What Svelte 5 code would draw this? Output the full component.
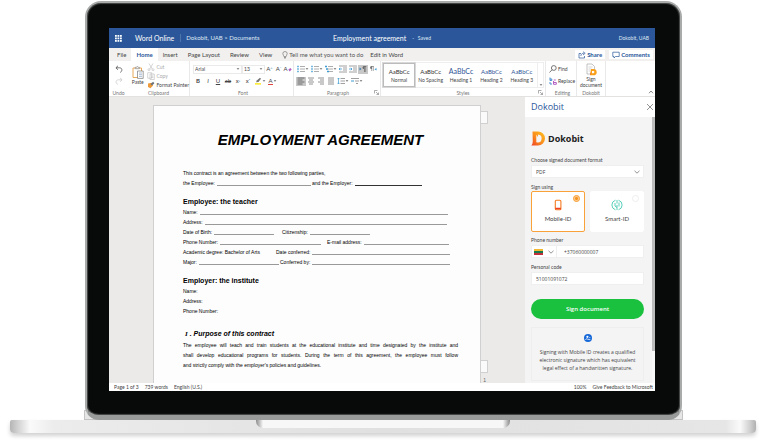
<script lang="ts">
    type Field = { label: string; width: number; line?: boolean; dark?: boolean };

    const tabs = ['File', 'Home', 'Insert', 'Page Layout', 'Review', 'View'];
    const styles = ['Normal', 'No Spacing', 'Heading 1', 'Heading 2', 'Heading 3'];

    const parties: Field[] = [
        { label: 'the Employee:', width: 128, line: true },
        { label: 'and the Employer:', width: 110, line: true, dark: true }
    ];
    const teacher: Field[][] = [
        [{ label: 'Name:', width: 265, line: true }],
        [{ label: 'Address:', width: 264, line: true }],
        [{ label: 'Date of Birth:', width: 91, line: true }, { label: 'Citizenship:', width: 88, line: true }],
        [{ label: 'Phone Number:', width: 138, line: true }, { label: 'E-mail address:', width: 122, line: true }],
        [{ label: 'Academic degree: Bachelor of Arts', width: 85 }, { label: 'Date conferred:', width: 174, line: true }],
        [{ label: 'Major:', width: 96, line: true }, { label: 'Conferred by:', width: 170, line: true }]
    ];
    const gaps = [0, 0, 8, 6, 8, 1];
    const institute = ['Name:', 'Address:', 'Phone Number:'];

    let activeTab = $state('Home');
    let activeStyle = $state('Normal');
    let method = $state('mobile');
    let phone = $state('+37060000007');
    let code = $state('51001091072');
</script>

{#snippet caret()}
    <svg class="caret" viewBox="0 0 4 4"><path d="M.6 1.2h2.8L2 2.8z" fill="#666" /></svg>
{/snippet}

{#snippet chevron()}
    <svg class="chevron" viewBox="0 0 6 6"><path d="M.5 1.8 3 4.2l2.5-2.4" fill="none" stroke="#666" stroke-width=".7" /></svg>
{/snippet}

{#snippet lines(x1: number, x2: number, color: string)}
    <path d="M{x1} 1.5H{x2}M{x1} 4H{x2}M{x1} 6.5H{x2}" stroke={color} stroke-width=".8" />
{/snippet}

{#snippet launcher()}
    <svg class="launcher" viewBox="0 0 5 5" fill="none" stroke="#777" stroke-width=".6"><path d="M.5 3.5v-3h3M2 2l2.4 2.4M4.5 2.5v2h-2" /></svg>
{/snippet}

{#snippet field(f: Field)}
    <span class="field" style="width: {f.width}px">
        {f.label}
        {#if f.line}<span class="rule" class:dark={f.dark}></span>{/if}
    </span>
{/snippet}

<div class="laptop">
    <div class="lid">
        <div class="screen">
            <header class="topbar">
                <div class="side">
                    <button class="waffle" aria-label="App launcher">
                        <svg viewBox="0 0 7 7" fill="#fff">
                            {#each [0, 2.5, 5] as y}
                                {#each [0, 2.5, 5] as x}
                                    <rect {x} {y} width="1.8" height="1.8" />
                                {/each}
                            {/each}
                        </svg>
                    </button>
                    <span class="brand">Word Online</span>
                    <nav class="crumbs"><a href="#org">Dokobit, UAB</a> &gt; <a href="#docs">Documents</a></nav>
                </div>
                <span class="doc-name">Employment agreement</span>
                <span class="saved">-&nbsp;&nbsp; Saved</span>
                <div class="side">
                    <a class="account" href="#account">Dokobit, UAB</a>
                </div>
            </header>

            <nav class="tabs">
                {#each tabs as tab}
                    <button class="tab" class:active={activeTab === tab} onclick={() => (activeTab = tab)}>{tab}</button>
                {/each}
                <label class="tell">
                    <svg class="icon" viewBox="0 0 8 8" fill="none" stroke="#666" stroke-width=".6">
                        <path d="M2.9 5.6C2.9 4.5 1.8 4 1.8 2.7a2.2 2.2 0 0 1 4.4 0C6.2 4 5.1 4.5 5.1 5.6zM3 6.5h2M3.4 7.3h1.2" />
                    </svg>
                    <input placeholder="Tell me what you want to do" aria-label="Tell me what you want to do" />
                </label>
                <button class="tab">Edit in Word</button>
                <button class="chip share">
                    <svg class="icon" viewBox="0 0 8 8" fill="none" stroke="#2b579a" stroke-width=".7">
                        <path d="M3 2.5H1V7h5.500V5M2.800 5c.2-2 1.500-2.700 3-2.700M5 .7l2.200 1.600L5 4" />
                    </svg>
                    Share
                </button>
                <button class="chip">
                    <svg class="icon" viewBox="0 0 8 8" fill="none" stroke="#2b579a" stroke-width=".7">
                        <path d="M.8 1.2h6.400v4.300H3.500L2 7V5.500H.8z" />
                    </svg>
                    Comments
                </button>
            </nav>

            <div class="ribbon">
                <section class="group undo">
                    <div class="body column">
                        <button aria-label="Undo">
                            <svg class="icon" viewBox="0 0 8 8" fill="none" stroke="#555" stroke-width=".8"><path d="M3 .8.900 2.800 3 4.800M1 2.800h3.500c3 0 3 3.200.8 4.700" /></svg>
                        </button>
                        <button aria-label="Redo">
                            <svg class="icon" viewBox="0 0 8 8" fill="none" stroke="#ccc" stroke-width=".8"><path d="M5 .8l2.100 2L5 4.800M7 2.800H3.500c-3 0-3 3.200-.8 4.700" /></svg>
                        </button>
                    </div>
                    <footer>Undo</footer>
                </section>

                <section class="group clipboard">
                    <div class="body">
                        <button class="paste">
                            <svg viewBox="0 0 12 13" fill="none">
                                <path d="M1 2h8.500v9.500H1z" fill="#fff" stroke="#e8a95a" />
                                <path d="M3.200 2.700V1.300h1.300c0-1 1.600-1 1.600 0h1.300v1.400z" fill="#fff" stroke="#777" stroke-width=".6" />
                                <path d="M5.500 5h5.700v7.400H5.500z" fill="#fff" stroke="#777" stroke-width=".7" />
                                <path d="M7 7h3M7 8.700h3M7 10.400h3" stroke="#7794b8" stroke-width=".6" />
                            </svg>
                            Paste
                        </button>
                        <div class="stack">
                            <button disabled>
                                <svg class="icon" viewBox="0 0 8 8" fill="none" stroke="#bbb" stroke-width=".6"><path d="M2 .5 5.300 6M6 .5 2.700 6" /><circle cx="2" cy="6.7" r="1" /><circle cx="6" cy="6.7" r="1" /></svg>
                                Cut
                            </button>
                            <button disabled>
                                <svg class="icon" viewBox="0 0 8 8" fill="#fff" stroke="#bbb" stroke-width=".6"><path d="M.7.7h4v5.500h-4zM3 2h4.300v5.500H3z" /><path d="M4 4h2.300M4 5.500h2.300" /></svg>
                                Copy
                            </button>
                            <button>
                                <svg class="icon" viewBox="0 0 8 8"><path d="M1 2.500 4.500 1.800 6 4.500 3.500 7.200 1 6z" fill="#ed9a3c" /><path d="M3.500 3 6.200.8l1.200 1.400L5 4.600z" fill="#69737c" /></svg>
                                Format Painter
                            </button>
                        </div>
                    </div>
                    <footer>Clipboard</footer>
                </section>

                <section class="group font">
                    <div class="body column">
                        <div class="row">
                            <span class="select family">
                                <select aria-label="Font"><option>Arial</option></select>
                                {@render caret()}
                            </span>
                            <span class="select size">
                                <select aria-label="Font size"><option>13</option></select>
                                {@render caret()}
                            </span>
                            <button class="tool">A<sup>^</sup></button>
                            <button class="tool">A<sup>ˇ</sup></button>
                            <button class="tool" aria-label="Clear formatting">
                                A<svg class="mark" viewBox="0 0 4 6"><path d="M.3 3.500 2.500 2l1.200 1.500-2 2z" fill="#b35fc4" /></svg>
                            </button>
                        </div>
                        <div class="row marks">
                            <button><b>B</b></button>
                            <button><i>I</i></button>
                            <button><u>U</u></button>
                            <button><s>ab</s></button>
                            <button>x<sub>₂</sub></button>
                            <button>x<sup>²</sup></button>
                            <button class="pen" aria-label="Highlight">
                                <svg class="icon" viewBox="0 0 8 8"><path d="M1 6h6v1.700H1z" fill="#ffec3d" /><path d="M2 5.200 3 3.200 6 .7l1 1.100L4.500 5z" fill="#777" /></svg>
                                {@render caret()}
                            </button>
                            <button class="ink"><span>A</span>{@render caret()}</button>
                        </div>
                    </div>
                    <footer>Font</footer>
                </section>

                <section class="group paragraph">
                    <div class="body column">
                        <div class="row">
                            {#each ['Bullets', 'Numbering', 'Multilevel list'] as name, i}
                                <button class="drop" aria-label={name}>
                                    <svg class="icon" viewBox="0 0 8 8">
                                        {@render lines(3, 8, '#999')}
                                        <path d={i === 2 ? 'M0 1.5h2M1 4h2M2 6.5h2' : 'M.3 1.5h1.4M.3 4h1.4M.3 6.5h1.4'} stroke="#3c9bd0" stroke-width="1.3" />
                                    </svg>
                                    {@render caret()}
                                </button>
                            {/each}
                            {#each ['Decrease indent', 'Increase indent'] as name, i}
                                <button aria-label={name}>
                                    <svg class="icon" viewBox="0 0 8 8">
                                        <path d="M0 1h8M4 3h4M4 5h4M0 7h8" stroke="#888" stroke-width=".8" />
                                        <path d={i ? 'M0 4h3M1.8 2.8 3 4 1.8 5.2' : 'M0 4h3M1.2 2.8 0 4l1.2 1.2'} fill="none" stroke="#3c9bd0" stroke-width=".8" />
                                    </svg>
                                </button>
                            {/each}
                            <button class="pressed" aria-label="Left to right">
                                <svg class="icon" viewBox="0 0 8 8"><path d="M.5 2.500v3L2.500 4z" fill="#3c7fb0" /><path d="M7.500 1H5a1.500 1.500 0 0 0 0 3V7h.7V1.700h.8V7h.6V1.700z" fill="#666" /></svg>
                            </button>
                            <button aria-label="Right to left">
                                <svg class="icon" viewBox="0 0 8 8"><path d="M5 1H2.500a1.500 1.500 0 0 0 0 3v2h.6V1.700h.8V6h.6V1.700z" fill="#777" /><path d="M7.500 3v2.500L5.500 4.200z" fill="#3c9bd0" /></svg>
                            </button>
                        </div>
                        <div class="row">
                            <button class="pressed" aria-label="Align left">
                                <svg class="icon" viewBox="0 0 8 8"><path d="M.5 1h7M.5 3h5M.5 5h7M.5 7h5" stroke="#555" stroke-width=".8" /></svg>
                            </button>
                            <button aria-label="Center">
                                <svg class="icon" viewBox="0 0 8 8"><path d="M1 1h6M2 3h4M1 5h6M2 7h4" stroke="#777" stroke-width=".8" /></svg>
                            </button>
                            <button aria-label="Align right">
                                <svg class="icon" viewBox="0 0 8 8"><path d="M1 1h6M3 3h4M1 5h6M3 7h4" stroke="#777" stroke-width=".8" /></svg>
                            </button>
                            <button aria-label="Justify">
                                <svg class="icon" viewBox="0 0 8 8"><path d="M1 1h6M1 3h6M1 5h6M1 7h6" stroke="#777" stroke-width=".8" /></svg>
                            </button>
                            <button class="drop" aria-label="Line spacing">
                                <svg class="icon" viewBox="0 0 8 8">
                                    {@render lines(3.5, 8, '#888')}
                                    <path d="M1.500 1v6M.4 2.200 1.500 1l1.100 1.200M.4 5.800 1.500 7l1.100-1.200" fill="none" stroke="#3c9bd0" stroke-width=".7" />
                                </svg>
                                {@render caret()}
                            </button>
                            <button class="drop" aria-label="Paragraph options">
                                <svg class="icon" viewBox="0 0 8 8"><path d="M0 1.500h8M4 4h4M5 6.500h2" stroke="#888" stroke-width=".8" /><path d="M0 4h3" stroke="#3c9bd0" /></svg>
                                {@render caret()}
                            </button>
                        </div>
                    </div>
                    <footer>Paragraph {@render launcher()}</footer>
                </section>

                <section class="group styles">
                    <div class="gallery">
                        {#each styles as name, i}
                            <button class="style" class:chosen={activeStyle === name} onclick={() => (activeStyle = name)}>
                                <span class="sample" class:blue={i > 1} class:large={i === 2}>AaBbCc</span>
                                {name}
                            </button>
                        {/each}
                        <button class="more" aria-label="More styles">{@render caret()}</button>
                    </div>
                    <footer>Styles {@render launcher()}</footer>
                </section>

                <section class="group editing">
                    <div class="body column">
                        <button>
                            <svg class="icon" viewBox="0 0 8 8" fill="none" stroke="#555" stroke-width=".8"><circle cx="4.8" cy="3" r="2.4" /><path d="M3 4.800.5 7.500" /></svg>
                            Find
                        </button>
                        <button>
                            <svg class="icon" viewBox="0 0 8 8" fill="none" stroke-width="1"><path d="M1 .5v3h1.800V2H1M1 5v2h2" stroke="#4a8fd0" /><path d="M4.800 3h2M4.500 5.500h2.800V7.300H4.500V4" stroke="#b35fc4" /></svg>
                            Replace
                        </button>
                    </div>
                    <footer>Editing</footer>
                </section>

                <section class="group sign">
                    <button class="paste">
                        <svg viewBox="0 0 12 13" fill="none">
                            <path d="M2 1h5l2.500 2.500V11H2z" fill="#fff" stroke="#aaa" stroke-width=".7" />
                            <path d="M3.500 4h4M3.500 6h3M3.500 8h2" stroke="#bbb" stroke-width=".6" />
                            <path d="M6 6h2.500a3 3 0 0 1 0 6.300H5z" fill="#f9a01b" />
                            <path d="M7 8h1.300a1 1 0 0 1 0 2.200H7z" fill="#fff" />
                            <path d="M5 12.300 6 9v2z" fill="#f04e23" />
                        </svg>
                        Sign document
                    </button>
                    <footer>Dokobit</footer>
                </section>

                <button class="collapse" aria-label="Collapse ribbon">
                    <svg class="chevron" viewBox="0 0 6 6"><path d="M1 4.200 3 2l2 2.200" fill="none" stroke="#555" stroke-width=".7" /></svg>
                </button>
            </div>

            <main class="workspace">
                <div class="canvas">
                    <article class="page">
                        <h1>EMPLOYMENT AGREEMENT</h1>
                        <p class="line">This contract is an agreement between the two following parties,</p>
                        <p class="line parties">
                            {#each parties as f}{@render field(f)}{/each}
                        </p>

                        <h2>Employee: the teacher</h2>
                        {#each teacher as row, i}
                            <p class="line" style="gap: {gaps[i]}px">
                                {#each row as f}{@render field(f)}{/each}
                            </p>
                        {/each}

                        <h2>Employer: the institute</h2>
                        {#each institute as label}
                            <p class="line">{label}</p>
                        {/each}

                        <h2 class="clause"><span>I</span> . Purpose of this contract</h2>
                        <p class="prose">
                            <span>The employee will teach and train students at the educational institute and time designated by the institute and</span>
                            <span>shall develop educational programs for students. During the term of this agreement, the employee must follow</span>
                            and strictly comply with the employer's policies and guidelines.
                        </p>
                        <i class="flag top"></i>
                        <i class="flag bottom"></i>
                        <span class="page-number">1</span>
                    </article>
                </div>

                <aside class="panel">
                    <header class="panel-head">
                        Dokobit
                        <button aria-label="Close">
                            <svg class="icon" viewBox="0 0 8 8"><path d="M1 1l6 6M7 1 1 7" stroke="#666" stroke-width=".7" /></svg>
                        </button>
                    </header>
                    <div class="panel-scroll">
                        <form class="panel-body" onsubmit={(e) => e.preventDefault()}>
                            <div class="logo">
                                <svg viewBox="0 0 15 15">
                                    <defs>
                                        <linearGradient id="flame" x1="1" y1="0" x2="0" y2="1">
                                            <stop offset="0" stop-color="#ffc31f" />
                                            <stop offset=".55" stop-color="#f98a1d" />
                                            <stop offset="1" stop-color="#ee3f24" />
                                        </linearGradient>
                                    </defs>
                                    <path fill="url(#flame)" fill-rule="evenodd" d="M1.500.5H7a7 7 0 0 1 0 14H.3C2 13 1.800 11 1.700 8zM5.300 3.600v6.800c0 .7.200 1 1 1a3.900 3.900 0 0 0 .8-7.800L6.700 6z" />
                                </svg>
                                Dokobit
                            </div>

                            <label class="caption" for="format">Choose signed document format</label>
                            <span class="control">
                                <select id="format"><option>PDF</option></select>
                                {@render chevron()}
                            </span>

                            <span id="using">Sign using</span>
                            <div class="methods" role="radiogroup" aria-labelledby="using">
                                <label class="method" class:selected={method === 'mobile'}>
                                    <input type="radio" value="mobile" bind:group={method} />
                                    <svg viewBox="0 0 12 12" fill="none"><rect x="3.3" y="1.2" width="5.6" height="9.6" rx="1" stroke="#f47b20" stroke-width="1.1" /><path d="M3.300 9.500h5.600" stroke="#ee3f24" stroke-width="1.5" /></svg>
                                    Mobile-ID
                                </label>
                                <label class="method" class:selected={method === 'smart'}>
                                    <input type="radio" value="smart" bind:group={method} />
                                    <svg viewBox="0 0 12 12" fill="none" stroke="#2fc4a8" stroke-width=".8"><path d="M4.500 1.200a5 5 0 0 0 0 9.600M7.500 1.200a5 5 0 0 1 0 9.600M6 1v3.500M6 6v5M4 4v3l2 1.500M8 3.500v4" /></svg>
                                    Smart-ID
                                </label>
                            </div>

                            <label class="caption" for="phone">Phone number</label>
                            <span class="control">
                                <button type="button" class="country" aria-label="Country">
                                    <svg class="flag-lt" viewBox="0 0 9 6"><path d="M0 0h9v2H0z" fill="#f5b72f" /><path d="M0 2h9v2H0z" fill="#187a4a" /><path d="M0 4h9v2H0z" fill="#c1303a" /></svg>
                                    {@render chevron()}
                                </button>
                                <input id="phone" bind:value={phone} />
                            </span>

                            <label class="caption" for="code">Personal code</label>
                            <span class="control"><input id="code" bind:value={code} /></span>

                            <button class="submit">Sign document</button>

                            <div class="note">
                                <svg viewBox="0 0 8 8"><circle cx="4" cy="4" r="4" fill="#1768d8" /><path d="M1.500 5.900c.6-1.300 1.200-1.300 1.800-.9.700.4 1.200.7 3 .5" fill="none" stroke="#fff" stroke-width=".8" /><circle cx="3.4" cy="2.8" r="1.1" fill="#fff" /><path d="M5 4.300 6.300 3" stroke="#fff" stroke-width=".7" /></svg>
                                <p>Signing with Mobile ID creates a qualified electronic signature which has equivalent legal effect of a handwritten signature.</p>
                            </div>
                        </form>
                        <div class="scrollbar"><div class="thumb"></div></div>
                    </div>
                </aside>
            </main>

            <footer class="status">
                <span>Page 1 of 3</span>
                <span>739 words</span>
                <span>English (U.S.)</span>
                <span class="zoom">100%</span>
                <a href="#feedback">Give Feedback to Microsoft</a>
            </footer>
        </div>
    </div>
    <div class="base"><div class="notch"></div></div>
</div>

<style>
    :global(body) {
        background: #fff;
    }

    .laptop {
        font: 5px/8px Lato, 'Open Sans', sans-serif;
        color: #444;
        padding: 1px 6px 9px 10px;
    }

    .laptop * {
        box-sizing: border-box;
    }

    button,
    input,
    select {
        font: inherit;
        color: inherit;
        background: none;
        border: 0;
        border-radius: 0;
        margin: 0;
        padding: 0;
        min-width: 0;
        appearance: none;
        outline: none;
    }

    button {
        display: flex;
        align-items: center;
        justify-content: center;
        white-space: nowrap;
        cursor: pointer;
    }

    a {
        color: inherit;
        text-decoration: none;
    }

    h1, h2, p {
        margin: 0;
    }

    svg {
        display: block;
        flex: none;
    }

    .icon {
        width: 8px;
        height: 8px;
    }

    .caret {
        width: 4px;
        height: 4px;
    }

    .chevron {
        width: 6px;
        height: 6px;
    }

    /* laptop frame */
    .lid {
        position: relative;
        margin: 0 74px 0 75px;
        padding: 25px 25px 24px 22px;
        background: #080a09;
        border: 2px solid #a9abaa;
        border-bottom: 5px solid #999b9a;
        border-radius: 16px 16px 14px 14px;
        box-shadow: inset 0 0 1px 1px #4a4c4b;
    }

    /* hinge behind the lid */
    .lid::after {
        content: '';
        position: absolute;
        z-index: -1;
        left: -3px;
        right: -3px;
        bottom: -5px;
        height: 8px;
        background: #e6e6e6;
        border: 1px solid #c4c4c4;
    }

    .base {
        display: flex;
        justify-content: center;
        height: 13px;
        border-radius: 2px 2px 4px 4px;
        background: linear-gradient(90deg, #b5b5b5, #d2d2d2 8px, #fafafa 20px, #ececec 44px, #e0e0e0 50%, #e6e6e6 calc(100% - 30px), #fafafa calc(100% - 16px), #d0d0d0 calc(100% - 6px), #b0b0b0);
        box-shadow: 0 3px 4px rgba(0, 0, 0, .18);
    }

    .notch {
        width: 34%;
        height: 8px;
        border-radius: 0 0 7px 7px;
        background: linear-gradient(90deg, #8a8a8a, #f7f7f7 7px, #f7f7f7 calc(100% - 7px), #8a8a8a);
    }

    .screen {
        background: #fff;
    }

    /* title bar */
    .topbar {
        display: flex;
        align-items: center;
        height: 20px;
        padding: 0 6px;
        background: #2b579a;
        color: #dfe7f3;
    }

    .side {
        display: flex;
        align-items: center;
        flex: 1;
    }

    .waffle {
        width: 7px;
        height: 7px;
        margin-right: 13px;
    }

    .waffle svg {
        width: 7px;
    }

    .brand {
        font-size: 7px;
        color: #fff;
        padding-right: 6px;
        border-right: 1px solid #4f75ad;
    }

    .crumbs {
        font-size: 6px;
        padding-left: 5px;
    }

    .doc-name {
        font-size: 7px;
        color: #fff;
    }

    .saved {
        padding-left: 6px;
    }

    .account {
        margin-left: auto;
    }

    /* tabs */
    .tabs {
        display: flex;
        align-items: center;
        height: 13px;
        padding: 0 2px 0 3px;
        background: #f1f0ef;
        font-size: 6px;
    }

    .tab {
        height: 13px;
        padding: 0 5px;
    }

    .tab.active {
        color: #2b579a;
        background: #fff;
        font-weight: 700;
    }

    .tell {
        display: flex;
        align-items: center;
        flex: 0 1 88px;
        padding-left: 4px;
    }

    .tell input {
        width: 100%;
    }

    .tell input::placeholder {
        color: #555;
        opacity: 1;
    }

    .chip {
        gap: 1px;
        height: 9px;
        padding: 0 3px;
        background: #fff;
        color: #2b579a;
        font-weight: 700;
    }

    .chip.share {
        margin: 0 4px 0 auto;
    }

    /* ribbon */
    .ribbon {
        display: flex;
        height: 36px;
        border-bottom: 1px solid #e4e2e0;
    }

    .group {
        display: flex;
        flex-direction: column;
        flex: none;
        border-right: 1px solid #e9e9e9;
    }

    .group footer {
        position: relative;
        margin-top: auto;
        height: 6px;
        line-height: 6px;
        text-align: center;
        color: #777;
    }

    .launcher {
        position: absolute;
        top: 0;
        right: 1px;
        width: 5px;
        height: 5px;
    }

    .body {
        display: flex;
        padding-top: 3px;
    }

    .column {
        flex-direction: column;
        gap: 2px;
    }

    .row {
        display: flex;
        align-items: center;
        height: 10px;
    }

    .undo {
        width: 19px;
        border: 0;
    }

    .column > button {
        height: 10px;
    }

    .clipboard {
        width: 62px;
    }

    .clipboard .body {
        padding-top: 1px;
    }

    .paste {
        flex-direction: column;
        width: 20px;
        line-height: 7px;
    }

    .paste svg {
        width: 12px;
        height: 13px;
    }

    .stack button {
        gap: 1px;
        height: 9px;
    }

    .stack button:disabled {
        color: #aaa;
    }

    .font {
        width: 104px;
        padding-left: 3px;
    }

    .select {
        display: flex;
        align-items: center;
        height: 9px;
        padding: 0 1px;
        border: 1px solid #eaeaea;
    }

    .select select {
        flex: 1;
    }

    .family {
        width: 49px;
    }

    .size {
        width: 23px;
    }

    .tool {
        width: 9px;
        font-size: 6px;
    }

    sup,
    sub {
        font-size: 4px;
        line-height: 4px;
        color: #3c7fb0;
    }

    .mark {
        width: 4px;
        height: 6px;
    }

    .marks {
        font-size: 6px;
    }

    .marks button {
        width: 10px;
    }

    .marks .pen,
    .marks .ink {
        width: 13px;
    }

    .ink span {
        line-height: 7px;
        border-bottom: 1px solid #e0443e;
    }

    .paragraph {
        width: 87px;
        padding-left: 2px;
    }

    .paragraph .row button {
        width: 10px;
        height: 9px;
    }

    .paragraph .row .drop {
        width: 14px;
    }

    .paragraph .row .pressed {
        background: #c8c8c8;
    }

    .styles {
        flex: 0 1 165px;
        padding: 1px 1px 0 1px;
    }

    .gallery {
        display: flex;
        height: 26px;
        border: 1px solid #eee;
    }

    .style {
        flex: 1;
        flex-direction: column;
    }

    .style.chosen {
        border: 1px solid #bbb;
        outline: 1px solid #d8d8d8;
    }

    .sample {
        font-size: 6px;
        line-height: 9px;
        color: #333;
    }

    .sample.blue {
        color: #2f5496;
    }

    .sample.large {
        font-size: 7px;
    }

    .more {
        width: 6px;
        align-items: flex-end;
        border-left: 1px solid #eee;
    }

    .editing {
        width: 31px;
        padding-left: 3px;
    }

    .editing .column > button {
        justify-content: flex-start;
        gap: 1px;
    }

    .sign {
        width: 29px;
    }

    .sign .paste {
        width: 28px;
        padding: 2px 2px 0;
        white-space: normal;
        line-height: 6px;
    }

    .collapse {
        align-self: flex-end;
        margin: 0 1px 1px auto;
    }

    /* document */
    .workspace {
        display: flex;
        height: 286px;
    }

    .canvas {
        flex: 1;
        min-width: 0;
        padding: 8px 44px 0;
        background: #ebeae8;
        overflow: hidden;
    }

    .page {
        position: relative;
        height: 100%;
        padding: 24px 22px 0 29px;
        background: #fdfdfd;
        border: 1px solid #d0d0d0;
        border-bottom: 0;
        font: 5px/10px 'Liberation Sans', Arial, sans-serif;
        color: #000;
    }

    h1 {
        margin-bottom: 18px;
        font-size: 15px;
        line-height: 20px;
        font-style: italic;
        text-align: center;
        white-space: nowrap;
    }

    h2 {
        margin-top: 9px;
        font-size: 7px;
        line-height: 10px;
    }

    h2.clause {
        margin: 13px 0 1px;
        font-style: italic;
    }

    .clause span {
        font-family: 'Liberation Serif', serif;
        padding-left: 2px;
    }

    .line {
        display: flex;
        white-space: nowrap;
    }

    .parties {
        gap: 1px;
    }

    .field {
        display: flex;
        flex: none;
        gap: 2px;
    }

    .rule {
        flex: 1;
        height: 8px;
        border-bottom: 1px solid #999;
    }

    .rule.dark {
        border-color: #333;
    }

    .prose {
        white-space: nowrap;
    }

    .prose span {
        display: block;
        text-align: justify;
        text-align-last: justify;
    }

    .flag {
        position: absolute;
        right: -8px;
        width: 7px;
        height: 13px;
        background: #fafafa;
        border: 1px solid #d0d0d0;
        border-left: 0;
    }

    .flag.top {
        top: 5px;
    }

    .flag.bottom {
        bottom: 10px;
    }

    .page-number {
        position: absolute;
        right: -6px;
        bottom: -2px;
        color: #666;
    }

    /* side panel */
    .panel {
        display: flex;
        flex-direction: column;
        width: 130px;
        background: #f4f4f5;
    }

    .panel-head {
        display: flex;
        align-items: center;
        justify-content: space-between;
        height: 20px;
        padding: 0 1px 0 6px;
        background: #fff;
        font: 9px/20px 'Open Sans', sans-serif;
        color: #2b579a;
    }

    .panel-scroll {
        display: flex;
        flex: 1;
    }

    .panel-body {
        display: flex;
        flex-direction: column;
        flex: 1;
        padding: 14px 8px 0 6px;
    }

    .logo {
        display: flex;
        align-items: center;
        gap: 2px;
        margin-bottom: 10px;
        font: 700 9px/15px 'Open Sans', sans-serif;
        color: #222;
    }

    .logo svg {
        width: 15px;
        height: 15px;
    }

    .caption {
        margin-bottom: 1px;
    }

    .control {
        display: flex;
        align-items: center;
        height: 13px;
        margin-bottom: 5px;
        background: #fff;
        border: 1px solid #efefef;
        font-family: 'Open Sans', sans-serif;
    }

    .control select,
    .control input {
        flex: 1;
        padding-left: 4px;
    }

    .control .chevron {
        margin-right: 3px;
    }

    .country {
        gap: 5px;
        height: 11px;
        padding-left: 2px;
        margin-right: 3px;
        border-right: 1px solid #eee;
    }

    .control .country .chevron {
        margin-right: 2px;
    }

    .flag-lt {
        width: 9px;
        height: 6px;
    }

    .methods {
        display: grid;
        grid-template-columns: 1fr 1fr;
        gap: 5px;
        margin-bottom: 4px;
    }

    .method {
        position: relative;
        display: flex;
        flex-direction: column;
        align-items: center;
        gap: 4px;
        height: 41px;
        padding-top: 7px;
        background: #fff;
        border: 1px solid #fff;
        border-radius: 2px;
        font-size: 6px;
    }

    .method.selected {
        border-color: #f9a23a;
    }

    .method svg {
        width: 12px;
        height: 12px;
    }

    .method input {
        position: absolute;
        top: 3px;
        right: 4px;
        width: 7px;
        height: 7px;
        border: 1px solid #eee;
        border-radius: 50%;
    }

    .method input:checked {
        border-color: #f7941d;
        background: radial-gradient(circle, #f7941d 1px, #fff 3px);
    }

    .submit {
        height: 20px;
        margin: 9px 0 8px;
        border-radius: 10px;
        background: #1ac13f;
        color: #fff;
        font: 600 6px/8px 'Open Sans', sans-serif;
    }

    .note {
        display: flex;
        flex-direction: column;
        align-items: center;
        gap: 6px;
        padding: 6px 6px 8px;
        border: 1px solid #eee;
        font-family: 'Open Sans', sans-serif;
        text-align: center;
    }

    .note svg {
        width: 8px;
        height: 8px;
    }

    .scrollbar {
        width: 3px;
        background: #f8f8f8;
    }

    .thumb {
        height: 88%;
        background: #bcbcbc;
    }

    /* status bar */
    .status {
        display: flex;
        gap: 6px;
        height: 8px;
        padding: 0 2px 0 5px;
        background: #fff;
    }

    .zoom {
        margin-left: auto;
    }
</style>
